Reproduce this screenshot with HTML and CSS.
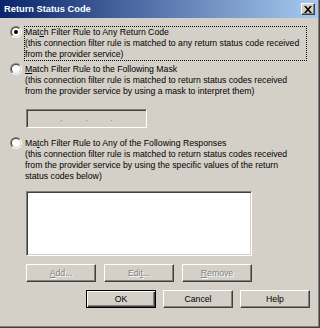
FILE: index.html
```html
<!DOCTYPE html>
<html>
<head>
<meta charset="utf-8">
<link rel="stylesheet" href="styles.css">
</head>
<body>
<div class="window">
  <div class="titlebar">
    <span class="title">Return Status Code</span>
    <button class="close" aria-label="Close">
      <svg width="8" height="7" viewBox="0 0 8 7"><path d="M0 0h2l2 2.2L6 0h2L5 3.5 8 7H6L4 4.8 2 7H0l3-3.5z" fill="#000"/></svg>
    </button>
  </div>
  <div class="content">
    <div class="option opt1">
      <span class="radio checked"></span>
      <span class="label focus">Mat<u>c</u>h Filter Rule to Any Return Code<br>(this connection filter rule is matched to any return status code received<br>from the provider service)</span>
    </div>
    <div class="option opt2">
      <span class="radio"></span>
      <span class="label"><u>M</u>atch Filter Rule to the Following Mask<br>(this connection filter rule is matched to return status codes received<br>from the provider service by using a mask to interpret them)</span>
    </div>
    <div class="mask">
      <span class="seg"></span><span class="dot">.</span><span class="seg"></span><span class="dot">.</span><span class="seg"></span><span class="dot">.</span><span class="seg"></span>
    </div>
    <div class="option opt3">
      <span class="radio"></span>
      <span class="label">Ma<u>t</u>ch Filter Rule to Any of the Following Responses<br>(this connection filter rule is matched to return status codes received<br>from the provider service by using the specific values of the return<br>status codes below)</span>
    </div>
    <div class="listbox"></div>
    <div class="btnrow row1">
      <button class="btn disabled"><u>A</u>dd...</button>
      <button class="btn disabled">Edi<u>t</u>...</button>
      <button class="btn disabled"><u>R</u>emove</button>
    </div>
    <div class="btnrow row2">
      <button class="btn default">OK</button>
      <button class="btn">Cancel</button>
      <button class="btn">Help</button>
    </div>
  </div>
</div>
</body>
</html>
```
FILE: styles.css
```css
html, body {
  margin: 0;
  padding: 0;
  background: #d4d0c8;
}
.window {
  box-sizing: border-box;
  width: 320px;
  height: 328px;
  background: #d4d0c8;
  border-right: 1px solid #404040;
  border-bottom: 1px solid #404040;
  box-shadow: inset -1px -1px #808080;
  font-family: "Liberation Sans", Arial, sans-serif;
  font-size: 8.7px;
  color: #000;
  display: flex;
  flex-direction: column;
}
.titlebar {
  height: 18px;
  margin-right: 1px;
  background: linear-gradient(to right, #0a246a, #a6caf0);
  display: flex;
  align-items: center;
  justify-content: space-between;
  padding: 0 3px 0 4px;
}
.title {
  color: #fff;
  font-weight: bold;
  font-size: 9.3px;
}
.close {
  box-sizing: border-box;
  width: 14px;
  height: 12px;
  padding: 0;
  background: #d4d0c8;
  border: 1px solid;
  border-color: #fff #404040 #404040 #fff;
  box-shadow: inset -1px -1px #808080;
  display: flex;
  align-items: center;
  justify-content: center;
}
.content {
  padding: 8px 0 0 10px;
  display: flex;
  flex-direction: column;
  align-items: flex-start;
}
.option {
  display: flex;
  align-items: flex-start;
  gap: 2px;
}
.opt2 { margin-top: 2px; }
.opt3 { margin-top: 9px; }
.radio {
  box-sizing: border-box;
  position: relative;
  width: 12px;
  height: 12px;
  border-radius: 50%;
  border: 1px solid;
  border-color: #808080 #fff #fff #808080;
  transform: rotate(0deg);
  flex: none;
}
.radio::before {
  content: "";
  position: absolute;
  inset: 0;
  border-radius: 50%;
  border: 1px solid;
  border-color: #404040 #d4d0c8 #d4d0c8 #404040;
  background: #fff;
}
.radio.checked::after {
  content: "";
  position: absolute;
  left: 3px;
  top: 3px;
  width: 4px;
  height: 4px;
  border-radius: 50%;
  background: #000;
}
.label {
  display: block;
  white-space: nowrap;
  line-height: 11px;
  border: 1px dotted transparent;
  width: 281px;
  padding-left: 0;
}
.label.focus {
  border-color: #000;
}
.mask {
  box-sizing: border-box;
  margin: 11px 0 0 16px;
  width: 121px;
  height: 19px;
  border: 1px solid;
  border-color: #808080 #fff #fff #808080;
  box-shadow: inset 1px 1px #404040, inset -1px -1px #d4d0c8;
  display: flex;
  align-items: center;
  justify-content: space-around;
  padding: 0 12px;
  color: #808080;
}
.seg { width: 18px; }
.dot { line-height: 1; }
.listbox {
  box-sizing: border-box;
  margin: 8px 0 0 16px;
  width: 226px;
  height: 65px;
  background: #fff;
  border: 1px solid;
  border-color: #808080 #fff #fff #808080;
  box-shadow: inset 1px 1px #404040, inset -1px -1px #d4d0c8;
}
.btnrow {
  display: flex;
  margin-top: 8px;
  gap: 7px;
}
.row1 { margin-left: 16px; gap: 8px; }
.row2 { margin-left: 76px; }
.btn {
  box-sizing: border-box;
  width: 70px;
  height: 18px;
  padding: 0;
  background: #d4d0c8;
  font-family: "Liberation Sans", Arial, sans-serif;
  font-size: 8.7px;
  color: #000;
  border: 1px solid;
  border-color: #fff #404040 #404040 #fff;
  box-shadow: inset -1px -1px #808080;
}
.btn.default {
  border: 1px solid #000;
  box-shadow: inset 1px 1px #fff, inset -1px -1px #404040, inset -2px -2px #808080;
}
.btn.disabled {
  color: #808080;
  text-shadow: 1px 1px #fff;
}
```
